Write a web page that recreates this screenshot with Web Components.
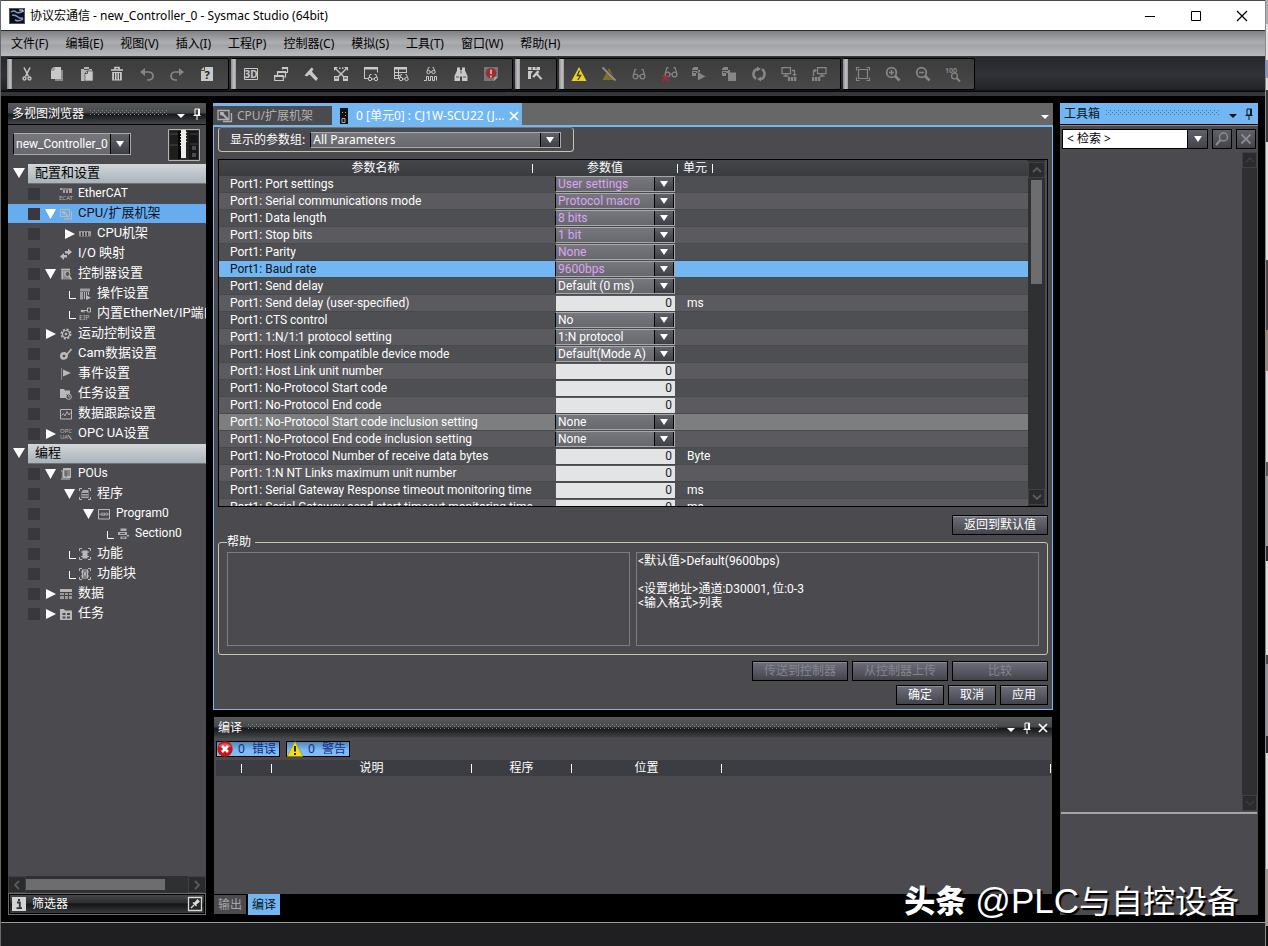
<!DOCTYPE html>
<html lang="zh-CN">
<head>
<meta charset="utf-8">
<title>协议宏通信 - new_Controller_0 - Sysmac Studio (64bit)</title>
<style>
  html, body { margin: 0; height: 100%; background: #000; overflow: hidden; }
  body {
    --panel: #4b4a4e;
    --accent: #72b7f2;
    --narrow: Roboto, "Noto Sans CJK SC", sans-serif;
    font: 12px/16px "Noto Sans", "Noto Sans CJK SC", sans-serif;
    color: #fff;
  }
</style>
</head>
<body>
<studio-window></studio-window>

<script>
/* Shared reset that each shadow root starts with. */
const BASE = `
  *, *::before, *::after { box-sizing: border-box; }
  :host([hidden]) { display: none; }
  button, input, select { font: inherit; color: inherit; margin: 0; padding: 0; border: 0; background: none; border-radius: 0; outline: 0; }
`;

function define(name, css, html) {
  const tpl = document.createElement('template');
  tpl.innerHTML = `<style>${BASE}${css}</style>${typeof html === 'string' ? html : ''}`;
  customElements.define(name, class extends HTMLElement {
    constructor() {
      super();
      this.attachShadow({ mode: 'open' }).append(tpl.content.cloneNode(true));
    }
    connectedCallback() {
      if (this.ready) return;
      this.ready = true;
      if (typeof html === 'function') this.shadowRoot.innerHTML += html(this);
    }
  });
}

/* ---------- icons: toolbar glyphs on a 16 grid, tree glyphs on a 12 grid ---------- */
const GLASSES = '<g fill="none" stroke="currentColor" stroke-width="1.2"><circle cx="4.5" cy="10.5" r="2.4"/><circle cx="11.5" cy="10.5" r="2.4"/><path d="M7 10h2M2.2 9.5L4 3.6h1.5M13.8 9.5L12 3.6h-1.5"/></g>';
const ICONS = {
  cut: [16, '<g fill="none" stroke="currentColor"><path d="M5 1.500l4.500 9M11 1.500l-4.500 9" stroke-width="1.500"/><circle cx="5.500" cy="12.500" r="1.500" stroke-width="1.300"/><circle cx="10.500" cy="12.500" r="1.500" stroke-width="1.300"/></g>'],
  copy: [16, '<path d="M6 4h8v11H6z" fill="#8c8c8c"/><path d="M4.5 1H12v12H2V3.5z" fill="currentColor"/><path d="M2 4h3V1" fill="none" stroke="#777"/>'],
  paste: [16, '<path d="M2 3h3V1h5v2h3v4H7v8H2z" fill="currentColor" opacity=".85"/><path d="M5 3.500h5" stroke="#555"/><path d="M8 5h6v10H6V7z" fill="currentColor" stroke="#555" stroke-width=".7"/><path d="M6 7.500h2.500V5" fill="none" stroke="#555"/>'],
  trash: [16, '<path d="M2 4h12M6 3.5v-2h4v2" fill="none" stroke="currentColor" stroke-width="1.6"/><path d="M3.2 6h9.6v8.5H3.2z" fill="currentColor"/><path d="M5.5 7v6.5M8 7v6.5M10.5 7v6.5" stroke="#444"/>'],
  undo: [16, '<path d="M3 6h7q4 .5 4 4t-4 4H8" fill="none" stroke="currentColor" stroke-width="1.7"/><path d="M1 6l5-4v8z" fill="currentColor"/>'],
  redo: [16, '<path d="M13 6H6q-4 .5-4 4t4 4h2" fill="none" stroke="currentColor" stroke-width="1.7"/><path d="M15 6l-5-4v8z" fill="currentColor"/>'],
  help: [16, '<path d="M5 1h9v14H2V4z" fill="currentColor"/><path d="M2 4.5h3.5V1" fill="none" stroke="#444"/><text x="8" y="13" text-anchor="middle" font-size="11" font-weight="700" fill="#222">?</text>'],
  view3d: [16, '<path d="M1.500 2.500h13v11h-13z" fill="none" stroke="currentColor"/><text x="8" y="12" text-anchor="middle" font-size="10" font-weight="700" fill="currentColor">3D</text>'],
  windows: [16, '<g fill="none" stroke="currentColor" stroke-width="1.2"><path d="M9.500 3.500V1.500h5v5h-2"/><path d="M1.700 9.500h8.600v5H1.700z"/><path d="M4.500 9V5.500h8V11h-2"/></g><path d="M4 5h9v2H4zM9 1h6v2H9zM1 9h9.500v2H1z" fill="currentColor"/>'],
  hammer: [16, '<path d="M1.500 9.500L8.500 1.500 10.500 3 9 5.500l1 1.500 5 5.500-2 2.500-5.500-5.500-1.300-1L4 10.500z" fill="currentColor"/>'],
  online: [16, '<path d="M3 3l10 10M13 3L3 13" stroke="currentColor" stroke-width="1.4"/><path d="M1 1h4L1 5zM15 1h-4l4 4zM6 1.500h1.500V3H6zM9 1.500h1.500V3H9z" fill="currentColor"/><path d="M1 10h5v5H1zM10 10h5v5h-5z" fill="currentColor"/><path d="M2 12h3M11 12h3" stroke="#444"/>'],
  watch: [16, '<path d="M1.500 12.500V2.500h13v4M1 12.500h4" fill="none" stroke="currentColor"/><path d="M1 1h14v2.500H1z" fill="currentColor"/><g transform="translate(5 8)" fill="none" stroke="currentColor"><circle cx="2" cy="5" r="1.700"/><circle cx="8" cy="5" r="1.700"/><path d="M3.700 5h2.600M1 3.500L2 .5h1.500M9 3.500L8 .5H6.500"/></g>'],
  watchTable: [16, '<g fill="none" stroke="currentColor"><path d="M1.500 12.500v-10h12v4M1 6.500h13M1 9.500h6M1 12.500h5M5.500 3v9.500"/><g transform="translate(6 8)"><circle cx="2" cy="5" r="1.700"/><circle cx="7.500" cy="5" r="1.700"/><path d="M3.700 5h2M1 3.500L2 .5h1M8.500 3.500L7.500 .5H6.500"/></g></g><path d="M1 1h13v2.500H1z" fill="currentColor"/>'],
  trace: [16, '<g fill="none" stroke="currentColor"><g transform="translate(3.500 1)"><circle cx="2" cy="5" r="1.700"/><circle cx="7" cy="5" r="1.700"/><path d="M3.700 5h1.600M.8 4L2 .5h1M8.200 4L7 .5H6"/></g><path d="M1 14.500h2.500v-4h2v4h2v-4h2v4h2v-4h2v4"/></g>'],
  find: [16, '<path d="M4 1.500h3v2.500h2V1.500h3v3L14.500 10v5H9v-4.500H7V15H1.500v-5L4 4.500z" fill="currentColor"/><path d="M8 4.500v3M3 11h3M10 11h3" stroke="#555"/>'],
  alarm: [16, '<path d="M1 1h14v10l-4 4H1z" fill="#777"/><path d="M15 11h-4v4z" fill="#aaa"/><circle cx="8" cy="7" r="5.300" fill="#a22a30"/><path d="M8 3.500v4.500M8 9.500v2" stroke="#bbb" stroke-width="1.800"/>'],
  tools: [16, '<path d="M1 1h12v3H1zM1 5h5l-2 3v5H1z" fill="currentColor"/><path d="M5 1v3M9 1v2" stroke="#444"/><path d="M5 10.500L10.500 4 12.500 5.500 11.500 8l4 4.500-1.500 1.800L9.500 9.500 7 12z" fill="currentColor" stroke="#444" stroke-width=".5"/>'],
  bolt: [16, '<path d="M8 1L15.500 15H.5z" fill="#ecd41a"/><path d="M8.500 4.500L6.300 9.500h3.400L6.800 14" fill="none" stroke="#3c3b30" stroke-width="1.300"/>'],
  boltOff: [16, '<path d="M8 2L14.500 14H1.500z" fill="#7c7128"/><path d="M3 1.500l13 13" stroke="#444" stroke-width="1.500"/><path d="M1.500 1.500l13 13" stroke="#8e8e8e" stroke-width="1.800"/>'],
  monitor: [16, GLASSES],
  monitorStop: [16, '<g transform="translate(2 -2)">' + GLASSES + '</g><path d="M1.500 9l6 6M7.500 9l-6 6" stroke="#a02a3a" stroke-width="2.200"/>'],
  run: [16, '<path d="M1 3l2-2h4v3h2v3H5v3H1z" fill="currentColor"/><path d="M1 4.500h6M2 6.500h3" stroke="#444"/><path d="M6.500 5.500L15 10.500 6.500 15z" fill="currentColor" stroke="#444" stroke-width=".7"/>'],
  stop: [16, '<path d="M1 3l2-2h4v3h2v3H5v3H1z" fill="currentColor"/><path d="M1 4.500h6M2 6.500h3" stroke="#444"/><path d="M7 6.500h8V15H7z" fill="currentColor"/>'],
  reset: [16, '<path d="M6 2.800A5.600 5.600 0 0 0 5 12.700M10 13.200A5.600 5.600 0 0 0 11 3.300" fill="none" stroke="currentColor" stroke-width="2.500"/><path d="M6 .5v5L10 3zM10 15.500v-5L6 13z" fill="currentColor"/>'],
  toPlc: [16, '<g fill="none" stroke="currentColor" stroke-width="1.300"><path d="M1 1.700h8.500v6H1zM5 8v2M2.500 10h5M11 4.500h2.500V9"/></g><path d="M11.300 8h4.400l-2.200 2.500zM7 11h2.300v4H7zM10 11h2.300v4H10zM13 11h2.300v4H13z" fill="currentColor"/>'],
  fromPlc: [16, '<g fill="none" stroke="currentColor" stroke-width="1.300"><path d="M6.500 1.700H15v6H6.500zM11 8v2M8.500 10h5M2.500 10V4.500H4"/></g><path d="M3.500 2.500v4L6 4.500zM1 11h2.300v4H1zM4 11h2.300v4H4zM7 11h2.300v4H7z" fill="currentColor"/>'],
  fit: [16, '<g fill="none" stroke="currentColor" stroke-width="1.200"><path d="M3.500 3.500h9v9h-9zM1.500 4.500v-3h3M11.500 1.500h3v3M14.500 11.500v3h-3M4.500 14.500h-3v-3"/></g>'],
  zoomIn: [16, '<g fill="none" stroke="currentColor"><circle cx="6.500" cy="6.500" r="4.800" stroke-width="1.800"/><path d="M10 10l4.500 4.500" stroke-width="2.600"/><path d="M4 6.500h5M6.500 4v5" stroke-width="1.500"/></g>'],
  zoomOut: [16, '<g fill="none" stroke="currentColor"><circle cx="6.500" cy="6.500" r="4.800" stroke-width="1.800"/><path d="M10 10l4.500 4.500" stroke-width="2.600"/><path d="M4 6.500h5" stroke-width="1.500"/></g>'],
  zoom100: [16, '<text x="0" y="7" font-size="7" font-weight="700" fill="currentColor">100</text><g fill="none" stroke="currentColor"><circle cx="9.500" cy="10" r="2.900" stroke-width="1.300"/><path d="M11.500 12l3.500 3.500" stroke-width="2"/></g>'],

  ecat: [12, '<path d="M0 0h2v2H0zM3 2h2v3H3zM6 2h2v3H6zM9 1h3v4H9z" fill="currentColor" opacity=".8"/><path d="M2 1h10" stroke="currentColor"/><text x="-1" y="12" font-size="6" fill="currentColor">ECAT</text>'],
  rack: [12, '<path d="M.5 1.500h9v7h-9zM11.500 3.500v7.500H4" fill="none" stroke="currentColor"/><path d="M2 3h3l.5 2L9 8.500 7.500 9.500 4.500 6 2 5.500z" fill="currentColor"/>'],
  rackTab: [16, '<path d="M1 2.500h11v9H1zM14.500 5v8.500H6" fill="none" stroke="currentColor" stroke-width="1.300"/><path d="M3 4h3.500l1 2.500L12 11l-1.500 1.500L6 8 3 7z" fill="currentColor"/>'],
  cpu: [12, '<path d="M0 3.500h12v5H0z" fill="#909090"/><path d="M0 4h12" stroke="currentColor"/><path d="M2.500 4v4M5.500 4v4M8.500 4v4" stroke="#333"/>'],
  io: [12, '<path d="M5 3h3V.5L12 4 8 7.500V5.500H5zM7 9.500H4V12L0 8.500 4 5v2h3z" fill="currentColor"/>'],
  ctrl: [12, '<path d="M1 .5h9v11H1z" fill="#8d8d90"/><path d="M1 1.500h9M2.500 3v8M4 4h2M4 6h2" stroke="currentColor"/><circle cx="7.500" cy="6" r="2.500" fill="#555" stroke="currentColor"/><path d="M9 8l2.500 3.500" stroke="currentColor" stroke-width="1.600"/>'],
  oper: [12, '<path d="M1 .5h10v3H1zM1 4h3v7.500H1z" fill="currentColor" opacity=".75"/><path d="M5.500 4v7M7.500 4v3M9.500 4v3" stroke="currentColor"/><path d="M7 7l5 2.700L7 12z" fill="currentColor"/>'],
  eip: [12, '<path d="M3 2.500h5M5 2.500v2M8.500 0h3v4h-3z" fill="none" stroke="currentColor"/><circle cx="3" cy="3" r="1.300" fill="currentColor"/><text x="0" y="12" font-size="7" fill="currentColor">EIP</text>'],
  gear: [12, '<circle cx="6" cy="6" r="4.700" fill="none" stroke="currentColor" stroke-width="1.600" stroke-dasharray="2.100 1.580"/><circle cx="6" cy="6" r="3.500" fill="none" stroke="currentColor" stroke-width="1.200"/><circle cx="6" cy="6" r="1.300" fill="currentColor"/>'],
  cam: [12, '<path d="M5 4q-5-.5-5 4t5 3.500q4-1 2.500-6z" fill="currentColor"/><circle cx="4" cy="8" r="1.300" fill="#444"/><path d="M6.500 7L11.500 1" stroke="currentColor" stroke-width="1.600"/>'],
  flag: [12, '<path d="M1.500 0v12" stroke="#888"/><path d="M3 1.500l8 3.500-8 3.500z" fill="currentColor"/>'],
  taskcfg: [12, '<path d="M0 1h4l1 1.500h5V6H6v4H0z" fill="currentColor"/><circle cx="8.700" cy="8.700" r="2.700" fill="#4b4a4e" stroke="currentColor"/><path d="M8.700 7v2h1.500" fill="none" stroke="currentColor" stroke-width=".8"/>'],
  tracecfg: [12, '<path d="M.5 1.500h11v9.500H.5z" fill="none" stroke="currentColor"/><path d="M1.500 7.500l2-2 1.500 2.500 2-4.500 2 3.500 1.500-2.500" fill="none" stroke="currentColor" stroke-width=".9"/>'],
  opc: [12, '<text x="0" y="5" font-size="6" fill="currentColor">OPC</text><text x="0" y="11" font-size="6" fill="currentColor">UA</text><path d="M8 7l3.500 4.500" stroke="currentColor" stroke-width="1.200"/>'],
  pous: [12, '<path d="M1 2h9v10H1z" fill="#888"/><path d="M3 0h8v10H3z" fill="currentColor"/><path d="M4 3h6M4 5h6M4 7h6M6 3v6M1.500 4v6" stroke="#555"/>'],
  prog: [12, '<path d="M.5 3v-2.500H3M9 .5h2.500V3M11.500 9v2.500H9M3 11.500H.5V9" fill="none" stroke="currentColor"/><path d="M4 2h5.500v8h-7V4z" fill="currentColor" opacity=".85"/><path d="M3 5.500h6M3 8h6" stroke="#444"/>'],
  ladder: [12, '<path d="M.5 1.500h11v9.500H.5z" fill="none" stroke="currentColor"/><path d="M1.500 6.200h2M4 4.500v3.500M6 4.500v3.500M6 6.200h1.500M9.500 6.200h1" stroke="currentColor"/><circle cx="8.700" cy="6.200" r="1.200" fill="none" stroke="currentColor" stroke-width=".8"/>'],
  section: [12, '<path d="M3.500.5h6v2.500h-6zM1 4h9v3H1zM3.500 8.500h6v2.500h-6z" fill="currentColor" opacity=".9"/><path d="M3 5.500h5M5 9.800h3" stroke="#555"/><path d="M10 7h2v1.500h-2z" fill="currentColor"/>'],
  func: [12, '<path d="M.5 3v-2.500H3M9 .5h2.500V3M11.500 9v2.500H9M3 11.500H.5V9" fill="none" stroke="currentColor"/><path d="M3.500 2.500h5v8h-5z" fill="currentColor"/><path d="M2 4h8M2 8.500h8" stroke="currentColor"/>'],
  fblock: [12, '<path d="M.5 3v-2.500H3M9 .5h2.500V3M11.500 9v2.500H9M3 11.500H.5V9" fill="none" stroke="currentColor"/><path d="M3.500 2h5v8h-5zM2 4h8M2 8h8" fill="none" stroke="currentColor" stroke-width="1.200"/><circle cx="6" cy="6" r="1.400" fill="currentColor"/>'],
  data: [12, '<path d="M0 1h12v10H0z" fill="#9b9b9d"/><path d="M0 2.500h12" stroke="currentColor" stroke-width="2.600"/><path d="M0 4.500h12M0 7.500h12M4.500 4v7M8.500 4v7" stroke="#444"/>'],
  tasks: [12, '<path d="M0 1h4l1 1.500h7V12H0z" fill="currentColor"/><path d="M2.500 5h3v2h-3zM7 5h3v2H7zM2.500 8.500h3v2h-3zM7 8.500h3v2H7z" fill="#4b4a4e"/>'],

  app: [16, '<path d="M0 0h16v16H0z" fill="#555"/><path d="M1 1h14v14H1z" fill="#0b0f1c"/><path d="M2 4q3-2 5 0t7-1M3 7q4 0 6 2t5 1M6 12q4 2 8-1" fill="none" stroke="#7f9ac4" stroke-width="1.500"/><path d="M10 2h4v2" fill="none" stroke="#eee"/>'],
  min: [16, '<path d="M3 8.500h10" stroke="currentColor"/>'],
  max: [16, '<path d="M3.500 3.500h9v9h-9z" fill="none" stroke="currentColor"/>'],
  close: [16, '<path d="M3 3l10 10M13 3L3 13" fill="none" stroke="currentColor" stroke-width="1.200"/>'],
  clear: [16, '<path d="M3.500 3.500l9 9M12.500 3.500l-9 9" fill="none" stroke="currentColor" stroke-width="1.800"/>'],
  cross: [12, '<path d="M2 2l8 8M10 2l-8 8" fill="none" stroke="currentColor" stroke-width="1.700"/>'],
  down: [12, '<path d="M2 6h8L6 10z" fill="currentColor"/>'],
  pin: [12, '<path d="M4 1h4.500v6H4z" fill="none" stroke="currentColor"/><path d="M7.500 1v6M2.500 7.500h7M6 8v4" stroke="currentColor"/>'],
  pinBox: [16, '<path d="M1.500 1.500h13v13h-13z" fill="#26282a" stroke="#d8d8d8" stroke-width="1.300"/><path d="M4 12l3-3M6 6.500l3.500 3.500M7.500 7.500L10.500 4l1.500 1.500-3.500 3z" fill="#ddd" stroke="#ddd" stroke-width="1.300"/>'],
  info: [16, '<path d="M1 1h14v14H1z" fill="#d4d4d4"/><path d="M6 6.500h2.800V12M5.500 12.200h5.500" fill="none" stroke="#333" stroke-width="1.800"/><path d="M7 3h2v2H7z" fill="#333"/>'],
  search: [16, '<circle cx="9.500" cy="6" r="4" fill="none" stroke="currentColor" stroke-width="1.500"/><path d="M6.500 9L2 14" stroke="currentColor" stroke-width="2"/>'],
  error: [16, '<circle cx="8" cy="8" r="7.700" fill="#c5161d"/><path d="M1.500 6a7 6 0 0 1 13 0z" fill="#e2575b"/><path d="M5 5l6 6M11 5l-6 6" stroke="#fff" stroke-width="2.600"/>'],
  warning: [16, '<path d="M8 .5L15.800 15.500H.2z" fill="#f6dc12" stroke="#a38e08" stroke-width=".6"/><path d="M8 5v5.500M8 12v2" stroke="#111" stroke-width="1.800"/>'],
  unit: [16, '<path d="M4 0h8v16H4z" fill="#111"/><path d="M6 4h1v1H6zM9 4h1v1H9zM9 7h1v1H9z" fill="#b9b94a"/><path d="M6 10.500h3v4H6z" fill="none" stroke="#aaa"/>'],
  photo: [32, '<path d="M0 0h32v32H0z" fill="#2f2f31"/><path d="M2 2h10v28H2z" fill="#1e1e1f"/><path d="M2 5h9M2 16h9" stroke="#4a4a4a"/><path d="M10 2h3v28h-3z" fill="#050505"/><path d="M13 1h5v28h-5z" fill="#eee"/><path d="M18 1h3v28h-3z" fill="#222"/><path d="M21 2h9v28h-9z" fill="#161616"/><path d="M22 5h8M22 15h8" stroke="#444"/><path d="M12.500 4v14M18.500 3v10" stroke="#d8cba4" stroke-dasharray="1 2"/><path d="M24 17h4v4h-4zM24 24h4v4h-4z" fill="#4c4c4c"/><path d="M.5.5h31v31H.5z" fill="none" stroke="#b5b5b5"/>'],
};

define('ui-icon', `
  :host { display: inline-block; flex: none; width: 16px; height: 16px; }
  svg { display: block; width: 100%; height: 100%; overflow: visible; font-family: "Noto Sans", sans-serif; }
`, el => {
  const [size, body] = ICONS[el.getAttribute('name')];
  return `<svg viewBox="0 0 ${size} ${size}" aria-hidden="true">${body}</svg>`;
});

/* Dotted drag grip that fills the free width of a title bar. */
define('ui-grip', `
  :host { display: block; flex: 1; height: 5px; overflow: hidden; color: #8a8c8e; }
  svg { display: block; width: 100%; height: 5px; }
`, `<svg aria-hidden="true"><defs><pattern id="dots" width="4" height="4" patternUnits="userSpaceOnUse">
  <path d="M0 0h1v1H0zM2 2h1v1H2z" fill="currentColor" shape-rendering="crispEdges"/></pattern></defs>
  <rect width="100%" height="5" fill="url(#dots)"/></svg>`);

/* Scroll bar with arrow buttons; --len is the thumb's share of the track. */
define('ui-scroll', `
  :host { display: flex; flex-direction: column; flex: none; width: 17px; background: #2f3032; color: #5b5b5e; }
  :host([horizontal]) { flex-direction: row; width: auto; height: 17px; }
  button { flex: none; width: 100%; height: 16px; background: #2a2b2d; border: 1px solid #3f4042; display: grid; place-items: center; }
  :host([horizontal]) button { width: 18px; height: 100%; }
  svg { width: 10px; height: 10px; }
  .track { flex: 1; display: flex; flex-direction: inherit; padding: 2px 3px; min-height: 0; }
  :host([horizontal]) .track { padding: 3px 0; }
  .thumb { flex: 0 0 var(--len, 0%); background: #6d6d6f; }
`, el => {
  const h = el.hasAttribute('horizontal');
  const a = h ? 'M7 1L3 5l4 4' : 'M1 7l4-4 4 4', b = h ? 'M3 1l4 4-4 4' : 'M1 3l4 4 4-4';
  const arrow = (d, l) => `<button aria-label="${l}"><svg viewBox="0 0 10 10"><path d="${d}" fill="none" stroke="currentColor" stroke-width="1.800"/></svg></button>`;
  return arrow(a, 'scroll back') + '<div class="track"><div class="thumb"></div></div>' + arrow(b, 'scroll forward');
});

/* Labelled drop-down. The option comes from the value attribute. */
define('ui-combo', `
  :host { display: grid; height: 16px; min-width: 0; }
  .box { display: grid; grid-template-columns: 1fr 20px; border: 1px solid #a9a9ab; border-left: 1px solid #000; background: linear-gradient(#77787d, #67686d); min-width: 0; height: 100%; }
  select { appearance: none; grid-area: 1 / 1 / 2 / 3; width: 100%; height: 100%; padding: 0 21px 0 2px; line-height: 14px; color: var(--combo-text, #fff); }
  .arrow { grid-area: 1 / 2; pointer-events: none; background: linear-gradient(#5f6068, #3f4047); border-left: 1px solid #000; border-right: 1px solid #000; display: grid; place-items: center; }
  svg { width: 8px; height: 6px; }
`, el => `<div class="box"><select aria-label="${el.getAttribute('label')}"><option>${el.getAttribute('value')}</option></select>
  <span class="arrow"><svg viewBox="0 0 8 6"><path d="M0 0h8L4 6z" fill="#fff"/></svg></span></div>`);

define('ui-button', `
  :host { display: block; width: 96px; height: 20px; }
  :host([small]) { width: 48px; }
  button { width: 100%; height: 100%; border: 1px solid #000; background: linear-gradient(#8c8d96 0 1px, #6b6c77 1px, #43444b); line-height: 16px; }
  button:disabled { color: #85868c; }
`, el => `<button ${el.hasAttribute('disabled') ? 'disabled' : ''}><slot></slot></button>`);

/* Title strip of a docked panel. */
define('dock-header', `
  :host { display: flex; align-items: center; height: 21px; flex: none; padding: 0 1px 0 4px; background: linear-gradient(#58595b, #47484a 45%, #17191b 55%, #2b2e30 75%, #42464a); }
  :host([active]) { background: var(--accent); color: #0c1420; }
  :host([active]) ui-grip { color: #44719a; }
  ui-grip { margin: 0 6px 2px 6px; }
  button { display: block; width: 16px; height: 16px; flex: none; }
  ui-icon { width: 12px; height: 12px; margin: 2px; }
`, el => `<slot></slot><ui-grip></ui-grip>
  <button aria-label="menu"><ui-icon name="down"></ui-icon></button>
  <button aria-label="pin"><ui-icon name="pin"></ui-icon></button>
  ${el.hasAttribute('closable') ? '<button aria-label="close"><ui-icon name="cross"></ui-icon></button>' : ''}`);

/* ---------- window chrome ---------- */
define('title-bar', `
  :host { display: flex; align-items: center; height: 30px; background: #fff; color: #000; padding-left: 8px; border-top: 1px solid #4a4a4a; flex: none; }
  span { flex: 1; padding-left: 5px; }
  button { width: 46px; height: 29px; display: grid; place-items: center; }
`, `<ui-icon name="app"></ui-icon><span>协议宏通信 - new_Controller_0 - Sysmac Studio (64bit)</span>
  <button aria-label="最小化"><ui-icon name="min"></ui-icon></button>
  <button aria-label="最大化"><ui-icon name="max"></ui-icon></button>
  <button aria-label="关闭"><ui-icon name="close"></ui-icon></button>`);

define('menu-bar', `
  :host { display: flex; align-items: stretch; gap: 1px; height: 27px; flex: none; padding: 0 2px; color: #000; border-top: 1px solid #2b2c2e;
    background: linear-gradient(#7f8083, #aeafb2 45%, #a2a3a6 55%, #b8b9bc 95%, #35363a 96%); }
  button { padding: 0 8px; }
`, ['文件(F)','编辑(E)','视图(V)','插入(I)','工程(P)','控制器(C)','模拟(S)','工具(T)','窗口(W)','帮助(H)'].map(t => `<button>${t}</button>`).join(''));

/* A leading "-" on an icon name marks a disabled tool. */
define('tool-group', `
  :host { display: flex; height: 32px; border: 1px solid #000; border-left: 0; border-radius: 2px; background: linear-gradient(#3c3c3d, #484849); padding-right: 6px; }
  i { width: 5px; background: linear-gradient(90deg, #8a8a8c, #c2c2c4 60%, #9a9a9c); }
  button { width: 30px; display: grid; place-items: center; color: #c9c9c9; }
  button:disabled { color: #868686; }
`, el => '<i></i>' + el.getAttribute('icons').split(' ').map(n => {
  const off = n.startsWith('-'); const name = n.replace('-', '');
  return `<button aria-label="${name}" ${off ? 'disabled' : ''}><ui-icon name="${name}"></ui-icon></button>`;
}).join(''));

define('tool-bar', `
  :host { display: flex; gap: 2px; flex: none; height: 39px; padding: 1px 6px 0; border-bottom: 4px solid #34363a;
    background: linear-gradient(#26272b, #313237 50%, #232428 92%, #000); }
`, `<tool-group icons="cut copy paste trash -undo -redo help"></tool-group>
  <tool-group icons="view3d windows hammer online watch watchTable trace find alarm"></tool-group>
  <tool-group icons="tools"></tool-group>
  <tool-group icons="bolt boltOff -monitor -monitorStop -run -stop -reset -toPlc -fromPlc"></tool-group>
  <tool-group icons="-fit -zoomIn -zoomOut -zoom100"></tool-group>`);

/* ---------- project explorer ---------- */
define('tree-item', `
  :host { display: flex; align-items: center; height: 20px; flex: none; padding-left: 20px; white-space: nowrap; overflow: hidden; font: 13px/17px var(--narrow); }
  :host([latin]) { font-size: 12px; line-height: 19px; }
  :host([selected]) { background: #68acf0; color: #0b1220; border-bottom: 1px solid #4b4a4e; }
  .mark { flex: none; width: 12px; height: 12px; background: #39383c; }
  .twist { flex: none; width: 20px; height: 12px; display: block; margin-left: calc(var(--level) * 19px); }
  .twist svg { display: block; width: 20px; height: 12px; color: #fff; }
  ui-icon { width: 12px; height: 12px; margin-right: 6px; color: #b9b9bb; }
  .name { height: 20px; }
`, el => {
  const shape = { open: '<path d="M5 1h11l-5.500 10z" fill="currentColor"/>', closed: '<path d="M6 1l10 5-10 5z" fill="currentColor"/>',
    leaf: '<path d="M10.500 3v7.500H17" fill="none" stroke="currentColor"/>' }[el.getAttribute('state')] || '';
  const level = +el.getAttribute('level');
  return `<span class="mark"></span><span class="twist" style="--level:${level}"><svg viewBox="0 0 20 12">${shape}</svg></span>
    <ui-icon name="${el.getAttribute('icon')}"></ui-icon><span class="name"><slot></slot></span>`;
});

define('tree-section', `
  :host { display: flex; height: 20px; flex: none; font-size: 13px; line-height: 16px; color: #000; }
  svg { width: 20px; height: 20px; flex: none; }
  span { flex: 1; padding-left: 7px; background: linear-gradient(#d3d6d8, #a9b3bb); border-bottom: 1px solid #6d7175; }
`, `<svg viewBox="0 0 20 20"><path d="M5 4h12l-6 10z" fill="#fff"/></svg><span><slot></slot></span>`);

define('explorer-panel', `
  :host { display: flex; flex-direction: column; min-width: 0; background: var(--panel); }
  .device { display: flex; justify-content: space-between; align-items: center; flex: none; height: 40px; padding: 1px 6px 3px 5px; border-top: 1px solid #000; font-family: var(--narrow); }
  .device ui-combo { width: 118px; height: 22px; }
  .device ui-icon { width: 32px; height: 32px; align-self: flex-end; }
  nav { flex: 1; min-height: 0; display: flex; flex-direction: column; overflow: hidden; }
  .filter { display: flex; align-items: center; height: 22px; flex: none; padding: 0 2px; border: 1px solid #6a6b6d; outline: 1px solid #000; outline-offset: -2px;
    background: linear-gradient(#4a4c4e, #2a2c2e 45%, #131516 50%, #3c4042); }
  .filter span { flex: 1; padding-left: 5px; }
  ui-scroll { --len: 86%; }
`, `<dock-header>多视图浏览器</dock-header>
  <div class="device"><ui-combo label="控制器" value="new_Controller_0"></ui-combo><ui-icon name="photo"></ui-icon></div>
  <nav>
    <tree-section>配置和设置</tree-section>
    <tree-item level="0" icon="ecat" latin>EtherCAT</tree-item>
    <tree-item level="0" icon="rack" state="open" selected>CPU/扩展机架</tree-item>
    <tree-item level="1" icon="cpu" state="closed">CPU机架</tree-item>
    <tree-item level="0" icon="io">I/O 映射</tree-item>
    <tree-item level="0" icon="ctrl" state="open">控制器设置</tree-item>
    <tree-item level="1" icon="oper" state="leaf">操作设置</tree-item>
    <tree-item level="1" icon="eip" state="leaf">内置EtherNet/IP端口</tree-item>
    <tree-item level="0" icon="gear" state="closed">运动控制设置</tree-item>
    <tree-item level="0" icon="cam">Cam数据设置</tree-item>
    <tree-item level="0" icon="flag">事件设置</tree-item>
    <tree-item level="0" icon="taskcfg">任务设置</tree-item>
    <tree-item level="0" icon="tracecfg">数据跟踪设置</tree-item>
    <tree-item level="0" icon="opc" state="closed">OPC UA设置</tree-item>
    <tree-section>编程</tree-section>
    <tree-item level="0" icon="pous" state="open" latin>POUs</tree-item>
    <tree-item level="1" icon="prog" state="open">程序</tree-item>
    <tree-item level="2" icon="ladder" state="open" latin>Program0</tree-item>
    <tree-item level="3" icon="section" state="leaf" latin>Section0</tree-item>
    <tree-item level="1" icon="func" state="leaf">功能</tree-item>
    <tree-item level="1" icon="fblock" state="leaf">功能块</tree-item>
    <tree-item level="0" icon="data" state="closed">数据</tree-item>
    <tree-item level="0" icon="tasks" state="closed">任务</tree-item>
  </nav>
  <ui-scroll horizontal></ui-scroll>
  <div class="filter"><ui-icon name="info"></ui-icon><span>筛选器</span><ui-icon name="pinBox"></ui-icon></div>`);

/* ---------- parameter editor ---------- */
const PARAMS = [
  ['Port settings', 'User settings', 'changed'],
  ['Serial communications mode', 'Protocol macro', 'changed'],
  ['Data length', '8 bits', 'changed'],
  ['Stop bits', '1 bit', 'changed'],
  ['Parity', 'None', 'changed'],
  ['Baud rate', '9600bps', 'changed selected'],
  ['Send delay', 'Default (0 ms)', ''],
  ['Send delay (user-specified)', 0, '', 'ms'],
  ['CTS control', 'No', ''],
  ['1:N/1:1 protocol setting', '1:N protocol', ''],
  ['Host Link compatible device mode', 'Default(Mode A)', ''],
  ['Host Link unit number', 0, ''],
  ['No-Protocol Start code', 0, ''],
  ['No-Protocol End code', 0, ''],
  ['No-Protocol Start code inclusion setting', 'None', 'hover'],
  ['No-Protocol End code inclusion setting', 'None', ''],
  ['No-Protocol Number of receive data bytes', 0, '', 'Byte'],
  ['1:N NT Links maximum unit number', 0, ''],
  ['Serial Gateway Response timeout monitoring time', 0, '', 'ms'],
  ['Serial Gateway send start timeout monitoring time', 0, '', 'ms'],
];

define('param-table', `
  :host { display: flex; min-height: 0; border: 1px solid #000; padding-right: 2px; font-family: var(--narrow); }
  .view { flex: 1; min-width: 0; overflow: hidden; }
  table { width: 100%; table-layout: fixed; border-collapse: separate; border-spacing: 0; }
  th, td { padding: 0; font-weight: 400; height: 17px; line-height: 15px; overflow: hidden; white-space: nowrap; vertical-align: middle; }
  th { height: 16px; background: linear-gradient(#43454a, #3a3c40); text-align: center; }
  th div { display: flex; align-items: center; height: 16px; }
  th div span { flex: 1; }
  th div::after { content: ""; width: 1px; height: 9px; background: #fff; }
  tr { background: #4d4f52; }
  tbody tr:nth-child(even) { background: #5b5a5e; }
  tbody td { border-bottom: 1px solid #48494c; }
  tbody tr.hover { background: #7d7e80; }
  tbody tr.selected { background: var(--accent); }
  .selected .name { color: #0a1420; }
  .changed { --combo-text: #dda3f5; }
  .name { padding-left: 11px; }
  .unit { padding-left: 11px; }
  input { display: block; width: 120px; height: 15px; background: #e3e4e6; color: #222; text-align: right; padding: 0 3px; border-left: 1px solid #555; line-height: 14px; }
  ui-combo { width: 120px; height: 16px; }
  ui-scroll { --len: 34%; padding: 2px 0 1px; }
`, () => `<div class="view"><table>
  <colgroup><col style="width:314px"><col style="width:22px"><col style="width:121px"><col style="width:2px"><col style="width:35px"><col></colgroup>
  <thead><tr><th><div><span>参数名称</span></div></th><th colspan="3"><div><span>参数值</span></div></th><th><div><span>单元</span></div></th><th></th></tr></thead>
  <tbody>${PARAMS.map(([n, v, c, u = '']) => `<tr class="${c}"><td class="name" colspan="2">Port1: ${n}</td><td>${
    v === 0 ? `<input type="text" value="0" aria-label="${n}">` : `<ui-combo label="${n}" value="${v}"></ui-combo>`
  }</td><td class="unit" colspan="3">${u}</td></tr>`).join('')}</tbody></table></div><ui-scroll></ui-scroll>`);

define('editor-panel', `
  :host { display: flex; flex-direction: column; min-height: 0; min-width: 0; }
  .tabs { display: flex; align-items: stretch; height: 24px; flex: none; background: #676767; border-bottom: 2px solid var(--accent); }
  .tabs button { display: flex; align-items: center; border-top: 3px solid var(--accent); gap: 4px; padding: 0 4px; white-space: nowrap; }
  .tabs button:first-child { width: 119px; background: var(--panel); color: #b0b0b2; }
  .tabs button:nth-child(2) { width: 190px; background: var(--accent); padding: 0 2px 0 4px; }
  .tabs button:nth-child(2) span { flex: 1; text-align: left; }
  .tabs .fill { flex: 1; }
  .tabs .more { align-self: center; margin: 2px 2px 0; }
  .cross { width: 12px; height: 12px; }
  .more { width: 12px; height: 12px; }
  .body { flex: 1; min-height: 0; display: flex; flex-direction: column; padding: 0 4px 4px; border: 1px solid var(--accent); border-top: 0; background: var(--panel); }
  .group { display: flex; align-items: center; gap: 5px; align-self: flex-start; width: 356px; height: 25px; flex: none; margin-bottom: 7px; padding: 0 12px 0 11px; border: 1px solid #c6c6ac; border-top-color: #77776f; border-radius: 4px; }
  .group ui-combo { flex: 1; }
  param-table { flex: 1; }
  .row { display: flex; justify-content: flex-end; gap: 4px; flex: none; }
  .reset { margin-top: 8px; }
  .final { margin-top: 4px; }
  fieldset { margin: 0 0 6px; padding: 3px 8px 8px; border: 1px solid #c6c6ac; border-radius: 3px; min-width: 0; flex: none; }
  legend { margin: 0; padding: 0 4px 0 0; line-height: 14px; height: 14px; }
  .help { display: grid; grid-template-columns: 1fr 1fr; gap: 6px; }
  .help div { height: 94px; border: 1px solid #7c7c7c; padding: 1px; line-height: 14px; white-space: pre-line; font-family: var(--narrow); }
`, `<div class="tabs" role="tablist">
    <button role="tab"><ui-icon name="rackTab"></ui-icon>CPU/扩展机架</button>
    <button role="tab" aria-selected="true"><ui-icon name="unit"></ui-icon><span>0 [单元0] : CJ1W-SCU22 (J...</span><ui-icon class="cross" name="cross"></ui-icon></button>
    <div class="fill"></div><ui-icon class="more" name="down"></ui-icon>
  </div>
  <div class="body">
    <div class="group"><span>显示的参数组:</span><ui-combo label="显示的参数组" value="All Parameters"></ui-combo></div>
    <param-table></param-table>
    <div class="row reset"><ui-button>返回到默认值</ui-button></div>
    <fieldset><legend>帮助</legend><div class="help"><div></div><div>&lt;默认值&gt;Default(9600bps)

&lt;设置地址&gt;通道:D30001, 位:0-3
&lt;输入格式&gt;列表</div></div></fieldset>
    <div class="row"><ui-button disabled>传送到控制器</ui-button><ui-button disabled>从控制器上传</ui-button><ui-button disabled>比较</ui-button></div>
    <div class="row final"><ui-button small>确定</ui-button><ui-button small>取消</ui-button><ui-button small>应用</ui-button></div>
  </div>`);

/* ---------- build output ---------- */
define('build-panel', `
  :host { display: flex; flex-direction: column; height: 198px; padding: 0 1px; min-width: 0; }
  .body { flex: 1; background: var(--panel); padding: 3px 1px 0 2px; }
  .chips { display: flex; gap: 6px; }
  .chips button { display: flex; align-items: center; gap: 4px; height: 16px; min-width: 63px; padding: 0 3px 0 0; border: 1px solid #000; background: linear-gradient(#5087b8, #7dbcf4 60%); color: #16297e; line-height: 14px; }
  .chips ui-icon { margin-right: 1px; }
  table { width: 100%; table-layout: fixed; border-collapse: collapse; margin-top: 3px; }
  th { padding: 0; font-weight: 400; background: #3c3d42; }
  th div { display: flex; align-items: center; height: 16px; }
  th div span { flex: 1; }
  th div::after { content: ""; width: 1px; height: 9px; background: #fff; }
  .tabs { display: flex; gap: 2px; height: 21px; flex: none; }
  .tabs button { width: 32px; }
  .tabs button:first-child { background: var(--panel); color: #a6a6a8; margin: 1px 0; }
  .tabs button:last-child { background: var(--accent); color: #0a1420; }
`, `<dock-header closable>编译</dock-header>
  <div class="body">
    <div class="chips"><button><ui-icon name="error"></ui-icon>0<span>&nbsp;错误</span></button><button><ui-icon name="warning"></ui-icon>0<span>&nbsp;警告</span></button></div>
    <table><colgroup><col style="width:26px"><col style="width:30px"><col style="width:200px"><col style="width:100px"><col style="width:150px"><col></colgroup>
    <thead><tr><th><div><span></span></div></th><th><div><span></span></div></th><th><div><span>说明</span></div></th><th><div><span>程序</span></div></th><th><div><span>位置</span></div></th><th><div><span></span></div></th></tr></thead></table>
  </div>
  <div class="tabs" role="tablist"><button role="tab">输出</button><button role="tab" aria-selected="true">编译</button></div>`);

/* ---------- toolbox ---------- */
define('toolbox-panel', `
  :host { display: flex; flex-direction: column; min-width: 0; background: var(--panel); }
  .search { display: flex; gap: 4px; flex: none; margin-top: 1px; padding: 3px 2px; border-top: 1px solid #888; box-shadow: 0 -1px #000; }
  .field { display: grid; grid-template-columns: 1fr 20px; flex: 1; height: 20px; border: 1px solid #000; background: #fff; color: #000; min-width: 0; }
  .field input { width: 100%; padding-left: 4px; min-width: 0; }
  button { display: grid; place-items: center; width: 20px; height: 20px; border: 1px solid #000; background: linear-gradient(#5f6068, #43444b); color: #8b8c92; }
  .field button { height: 18px; border-width: 0 0 0 1px; color: #fff; }
  .list { flex: 1; display: flex; justify-content: flex-end; padding-right: 1px; }
  ui-scroll { width: 15px; background: #2f2f31; color: #3a3a3c; }
  .info { height: 103px; flex: none; margin: 1px 1px 0; border-top: 2px solid #a4a6a6; }
`, `<dock-header active>工具箱</dock-header>
  <div class="search"><div class="field"><input type="text" value="&lt; 检索 &gt;" aria-label="检索"><button aria-label="历史"><svg width="8" height="6" viewBox="0 0 8 6"><path d="M0 0h8L4 6z" fill="currentColor"/></svg></button></div>
  <button aria-label="查找"><ui-icon name="search"></ui-icon></button><button aria-label="清除"><ui-icon name="clear"></ui-icon></button></div>
  <div class="list"><ui-scroll></ui-scroll></div><div class="info"></div>`);

/* The aside is the sliver of another window that shows past the right edge. */
define('studio-window', `
  :host { display: flex; height: 100vh; position: relative; }
  .app { flex: 1; min-width: 0; display: flex; flex-direction: column; border-left: 1px solid #6a6a6c; background: #000; }
  main { flex: 1; min-height: 0; display: grid; grid-template-columns: 198px minmax(0, 1fr) 198px; gap: 7px; padding: 7px; }
  .center { display: flex; flex-direction: column; gap: 7px; min-height: 0; min-width: 0; }
  editor-panel { flex: 1; }
  footer { height: 24px; flex: none; background: #1f1f21; border-top: 1px solid #9a9a9c; }
  aside { width: 3px; border-left: 1px solid #8a8a8c; background: linear-gradient(#b0b0b2 0 24px, #e4e4e6 24px 60px, #8c90c4 60px 78px, #dcdcdc 78px 90px, #3a3a3c 90px 142px, #dedede 142px 260px, #4a4548 260px 330px, #94887f 330px 371px, #dcdcdc 371px 462px, #5a5a5c 462px 476px, #9a9a9c 476px 546px, #2c2c30 546px 561px, #dedede 561px 655px, #4a4a4c 655px 664px, #94949a 664px 736px, #2c2c30 736px 753px, #dedede 753px 869px, #9c9896 869px 926px, #111 926px); }
  .watermark { position: absolute; right: 29px; bottom: 20px; display: flex; align-items: center; gap: 9px; white-space: nowrap; color: #fff; text-shadow: 2px 2px 1px #000; font: 32px/48px "Liberation Sans", "Noto Sans CJK SC", sans-serif; }
  .watermark b { font-size: 31px; font-weight: 900; }
  .watermark .latin { font-size: 35px; }
`, `<div class="app"><title-bar></title-bar><menu-bar></menu-bar><tool-bar></tool-bar>
  <main><explorer-panel></explorer-panel><div class="center"><editor-panel></editor-panel><build-panel></build-panel></div><toolbox-panel></toolbox-panel></main>
  <footer></footer></div><aside></aside>
  <div class="watermark"><b>头条</b><span><span class="latin">@PLC</span>与自控设备</span></div>`);
</script>
</body>
</html>
